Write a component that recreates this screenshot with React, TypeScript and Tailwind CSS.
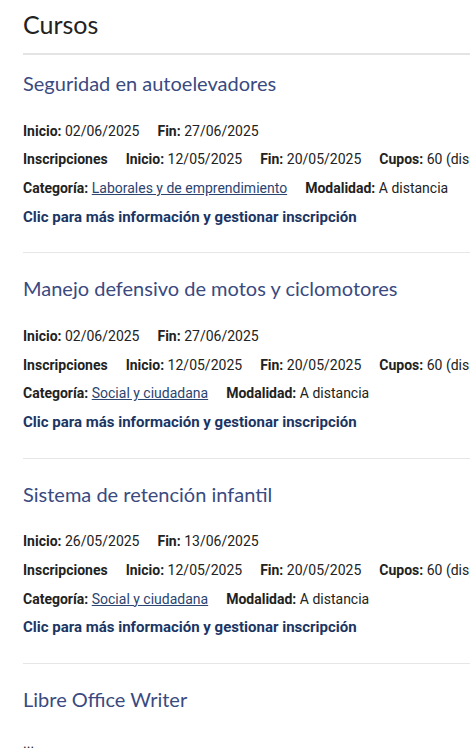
import React from "react";

type Course = {
  title: string;
  inicio: string;
  fin: string;
  cat: string;
};

const courses: Course[] = [
  { title: "Seguridad en autoelevadores", inicio: "02/06/2025", fin: "27/06/2025", cat: "Laborales y de emprendimiento" },
  { title: "Manejo defensivo de motos y ciclomotores", inicio: "02/06/2025", fin: "27/06/2025", cat: "Social y ciudadana" },
  { title: "Sistema de retención infantil", inicio: "26/05/2025", fin: "13/06/2025", cat: "Social y ciudadana" },
];

function Row({ children }: { children: React.ReactNode }) {
  return <div className="flex gap-x-[18px] whitespace-nowrap leading-[28.7px] h-[28.7px] text-[14px] text-[#222]">{children}</div>;
}

const titleFont = { fontFamily: "Lato, 'Open Sans', sans-serif" };

export default function App() {
  return (
    <div className="w-full overflow-hidden bg-white" style={{ fontFamily: "Roboto, 'Liberation Sans', sans-serif" }}>
      <div className="ml-[23px] w-[600px]">
        <div className="pt-[8px] pb-[13px] border-b-2 border-[#e4e4e4]">
          <h1 className="text-[25px] leading-[32px] text-[#222]" style={titleFont}>Cursos</h1>
        </div>
        {courses.map((c, i) => (
          <div key={i} className={`${i === 0 ? "pt-[14px]" : "pt-[21px]"} pb-[21px] border-b border-[#e6e6e6]`}>
            <h2 className="text-[20px] leading-[28px] text-[#3a4a80]" style={titleFont}>{c.title}</h2>
            <div className="mt-[19.6px]">
              <Row>
                <span><b className="font-bold">Inicio:</b> {c.inicio}</span>
                <span><b className="font-bold">Fin:</b> {c.fin}</span>
              </Row>
              <Row>
                <b className="font-bold">Inscripciones</b>
                <span><b className="font-bold">Inicio:</b> 12/05/2025</span>
                <span><b className="font-bold">Fin:</b> 20/05/2025</span>
                <span><b className="font-bold">Cupos:</b> 60 (disp</span>
              </Row>
              <Row>
                <span><b className="font-bold">Categoría:</b> <a className="underline text-[#2b4470]" href="#">{c.cat}</a></span>
                <span><b className="font-bold">Modalidad:</b> A distancia</span>
              </Row>
              <div className="whitespace-nowrap leading-[28.7px] h-[28.7px] text-[15px] font-bold text-[#1b3563]">
                Clic para más información y gestionar inscripción
              </div>
            </div>
          </div>
        ))}
        <div className="pt-[21px] pb-[23px]">
          <h2 className="text-[20px] leading-[28px] text-[#3a4a80]" style={titleFont}>Libre Office Writer</h2>
          <div className="mt-[16px]">
            <Row><span>...</span></Row>
          </div>
        </div>
      </div>
    </div>
  );
}
